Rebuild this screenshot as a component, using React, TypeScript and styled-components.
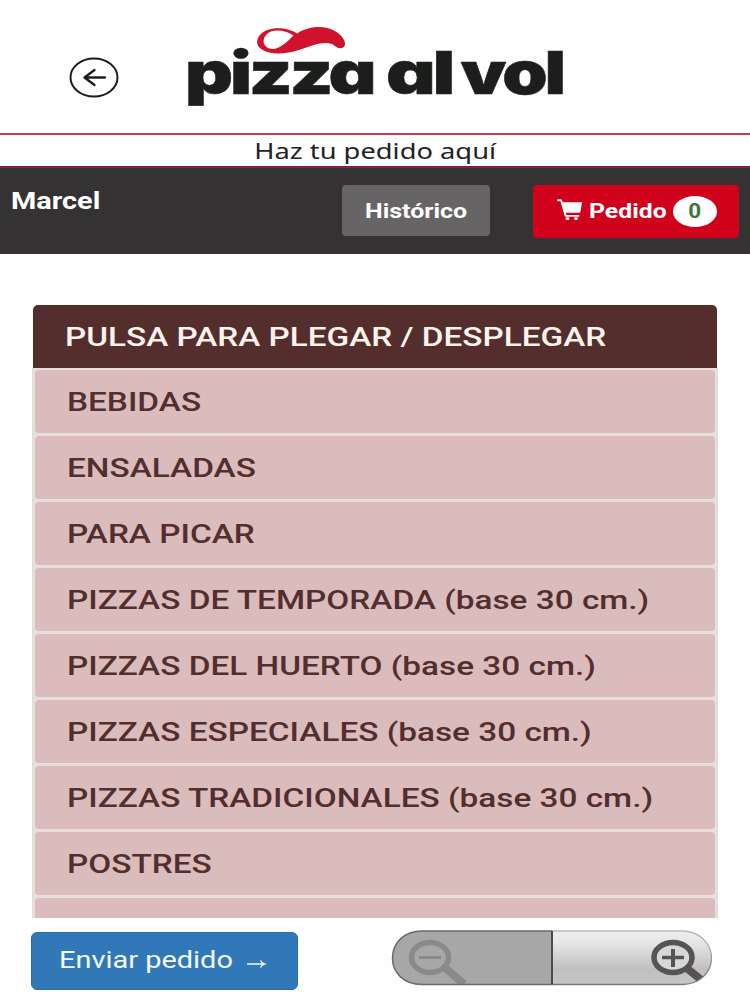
import React from "react";
import styled, { createGlobalStyle } from "styled-components";

const GlobalStyle = createGlobalStyle`
  * { box-sizing: border-box; }
  body {
    margin: 0;
    background: #fefefe;
    font-family: Roboto, "Liberation Sans", sans-serif;
    overflow: hidden;
  }
  button { border: 0; font: inherit; }
`;

const Page = styled.div`
  display: flex;
  flex-direction: column;
  width: 750px;
  height: 1000px;
  overflow: hidden;
`;

const Stretch = styled.span<{ $x: number; $center?: boolean }>`
  display: inline-block;
  white-space: nowrap;
  transform: scaleX(${(p) => p.$x});
  transform-origin: ${(p) => (p.$center ? "center" : "left center")};
`;

const Header = styled.header`
  display: flex;
  align-items: flex-start;
  height: 133px;
  flex: none;
`;

const BackButton = styled.button`
  display: flex;
  margin: 57px 0 0 69px;
  padding: 0;
  background: none;
`;

const Logo = styled.svg`
  display: block;
  margin: 20px 0 0 61px;
  font-family: Inter, sans-serif;
  font-weight: 900;
  font-feature-settings: "cv11" 1, "ss01" 0;
`;

const Tagline = styled.div`
  display: flex;
  justify-content: center;
  flex: none;
  height: 35px;
  border-top: 2px solid #b8404f;
  border-bottom: 2px solid #7c2638;
  color: #222;
  font: 400 21.5px/32px "Noto Sans", sans-serif;
`;

const UserBar = styled.nav`
  display: flex;
  align-items: flex-start;
  flex: none;
  height: 86px;
  padding: 17px 11px 0;
  background: #343232;
  color: #fff;
  font-weight: 700;
`;

const UserName = styled.div`
  width: 331px;
  height: 34px;
  font-size: 23px;
  line-height: 34px;
`;

const BarButton = styled.button<{ $w: number; $h: number; $bg: string; $pad: number }>`
  display: flex;
  align-items: center;
  width: ${(p) => p.$w}px;
  height: ${(p) => p.$h}px;
  padding: 0 0 0 ${(p) => p.$pad}px;
  border-radius: 4px;
  background: ${(p) => p.$bg};
  color: #fff;
  font-size: 21px;
  text-align: left;
`;

const CartLabel = styled.span`
  width: 84px;
  margin-left: 6px;
  padding-bottom: 2px;
`;

const Badge = styled.span`
  display: flex;
  align-items: center;
  justify-content: center;
  width: 44px;
  height: 31px;
  margin-bottom: 1px;
  border-radius: 22px / 15.5px;
  background: #fff;
  color: #3c763d;
  font-size: 20px;
`;

const Spacer = styled.div`
  flex: 1;
`;

const Menu = styled.main`
  flex: none;
  width: 686px;
  height: 613px;
  margin: 51px 0 0 32px;
  overflow: hidden;
`;

const MenuTitle = styled.h1`
  height: 63px;
  margin: 0 1px;
  padding-left: 32px;
  border-radius: 5px 5px 0 0;
  background: #532e2d;
  color: #fdf3ec;
  font-size: 26px;
  font-weight: 500;
  line-height: 64px;
`;

const Rows = styled.ul`
  display: flex;
  flex-direction: column;
  gap: 3px;
  margin: 0;
  padding: 2px 2px 0 2px;
  border: solid #dedbda;
  border-width: 0 1px;
  background: #e8dfdc;
  list-style: none;
`;

const Row = styled.li`
  height: 63px;
  padding-left: 32px;
  border-radius: 4px;
  background: #dbbcbc;
  color: #532e2f;
  font-size: 26px;
  font-weight: 500;
  line-height: 64px;
`;

const Footer = styled.footer`
  display: flex;
  align-items: flex-start;
  justify-content: space-between;
  padding: 12px 38px 0 31px;
`;

const SendButton = styled.button`
  display: flex;
  align-items: center;
  width: 267px;
  height: 58px;
  margin-top: 2px;
  padding: 0 0 2px 27px;
  border: 1px solid #2e6da4;
  border-radius: 6px;
  background: #3178b8;
  color: #f4f8fc;
  font-size: 24px;
`;

const SendLabel = styled.span`
  width: 188px;
  text-align: left;
`;

const SendArrow = styled.svg`
  margin-top: 8px;
`;

const MENU = [
  "BEBIDAS",
  "ENSALADAS",
  "PARA PICAR",
  "PIZZAS DE TEMPORADA (base 30 cm.)",
  "PIZZAS DEL HUERTO (base 30 cm.)",
  "PIZZAS ESPECIALES (base 30 cm.)",
  "PIZZAS TRADICIONALES (base 30 cm.)",
  "POSTRES",
  "",
];

const Cart = styled.svg`
  margin-bottom: 3px;
`;

const CartIcon = () => (
  <Cart width="26" height="22" viewBox="0 0 26 22" fill="#fff">
    <path d="M0 1.200Q0 .2 1.200 .2H3.500Q4.600 .2 4.900 1L5.800 3.300H25L23.500 12.500Q23.300 13.700 22 13.700H8.700L9.500 16H22.300V17.800H8.600Q7.900 17.800 7.700 17L3.500 2.200H1Q0 2.200 0 1.200Z" />
    <ellipse cx="10.500" cy="19.500" rx="1.900" ry="1.600" />
    <ellipse cx="19" cy="19.500" rx="1.900" ry="1.600" />
  </Cart>
);

const ZoomControl = () => (
  <svg width="321" height="56" viewBox="391 930 321 56">
    <defs>
      <linearGradient id="light" x1="0" y1="0" x2="0" y2="1">
        <stop offset="0" stopColor="#f0f0f0" />
        <stop offset=".25" stopColor="#e5e4e5" />
        <stop offset=".45" stopColor="#d5d4d5" />
        <stop offset=".7" stopColor="#c0bec0" />
        <stop offset="1" stopColor="#c8c6c8" />
      </linearGradient>
      <linearGradient id="rim" x1="0" y1="0" x2="0" y2="1">
        <stop offset="0" stopColor="#bbb" />
        <stop offset="1" stopColor="#777" />
      </linearGradient>
      <clipPath id="pill">
        <path d="M422 931H682C699 931 711.500 943 711.500 958S699 984.500 682 984.500H422C404 984.500 392.500 973 392.500 958S404 931 422 931Z" />
      </clipPath>
    </defs>
    <g clipPath="url(#pill)">
      <path fill="#a8a7a8" d="M391 930H552V986H391Z" />
      <path fill="url(#light)" d="M552 930H712V986H552Z" />
      <g fill="none" stroke="#8b8a8b">
        <ellipse cx="430" cy="957.500" rx="18.500" ry="15" strokeWidth="5.500" />
        <path strokeWidth="3" d="M419 957.500H441" />
        <path strokeWidth="8" d="M444 967L464 984" />
      </g>
      <g fill="none" stroke="#555354">
        <ellipse cx="673" cy="957.500" rx="19" ry="15" strokeWidth="5.500" fill="#d8d7d8" />
        <path strokeWidth="3.500" d="M662 957.500H684" />
        <path strokeWidth="4" d="M673 949V967" />
        <path strokeWidth="8" d="M686.500 968L702 980.500" />
      </g>
    </g>
    <path fill="none" stroke="#6b6a6b" strokeWidth="1.500" d="M552 931H422C404 931 392.500 943 392.500 958S404 984.500 422 984.500H552" />
    <path fill="none" stroke="url(#rim)" strokeWidth="1.300" d="M552 931H682C699 931 711.500 943 711.500 958S699 984.500 682 984.500H552" />
    <path stroke="#4b4a4b" strokeWidth="2" d="M552 931V984.500" />
  </svg>
);

export default function App() {
  return (
    <Page>
      <GlobalStyle />
      <Header>
        <BackButton aria-label="Volver">
          <svg width="50" height="42" viewBox="69 57 50 42" fill="none" stroke="#1c1c1e">
            <ellipse cx="94" cy="77.500" rx="23.500" ry="19" strokeWidth="2" />
            <path d="M105 77.500H84.500M94.500 70L84.500 77.500L94.500 85" strokeWidth="2.300" strokeLinecap="round" strokeLinejoin="round" />
          </svg>
        </BackButton>
        <Logo width="400" height="95" viewBox="180 20 400 95">
          <path
            fill="#d0122c"
            fillRule="evenodd"
            d="M297 33.500C288 27 270 26 262 33C255 39 256 46 262 49.500C270 55 285 54.500 299 50C312 45.500 323 41 332 44C335 45.500 337 49 342 48C345 47 345.500 44 344.500 41C341 32 329 26 316 27C309 27.500 302 30 297 33.500ZM293.500 35.500C285 29.500 272 29 267 34C262.500 38.500 262 44.500 268 48C277 52 286 43 293.500 35.500Z"
          />
          <g fill="#1c1e1c" stroke="#1c1e1c" strokeWidth=".5" fontSize="59" letterSpacing="-2.500">
            <text x="185" y="93.800" textLength="188.500" lengthAdjust="spacingAndGlyphs">pizza</text>
            <text x="386" y="93.800" textLength="66" lengthAdjust="spacingAndGlyphs">al</text>
            <text x="460.500" y="93.800" textLength="102.500" lengthAdjust="spacingAndGlyphs">vol</text>
          </g>
        </Logo>
      </Header>
      <Tagline>
        <Stretch $x={1.27} $center>Haz tu pedido aquí</Stretch>
      </Tagline>
      <UserBar>
        <UserName>
          <Stretch $x={1.255}>Marcel</Stretch>
        </UserName>
        <BarButton $w={148} $h={51} $bg="#666465" $pad={22.5}>
          <Stretch $x={1.19}>Histórico</Stretch>
        </BarButton>
        <Spacer />
        <BarButton $w={206} $h={53} $bg="#d0021b" $pad={24}>
          <CartIcon />
          <CartLabel>
            <Stretch $x={1.18}>Pedido</Stretch>
          </CartLabel>
          <Badge>
            <Stretch $x={1.12} $center>0</Stretch>
          </Badge>
        </BarButton>
      </UserBar>
      <Menu>
        <MenuTitle>
          <Stretch $x={1.28}>PULSA PARA PLEGAR / DESPLEGAR</Stretch>
        </MenuTitle>
        <Rows>
          {MENU.map((name, i) => (
            <Row key={i}>
              <Stretch $x={1.282}>{name}</Stretch>
            </Row>
          ))}
        </Rows>
      </Menu>
      <Footer>
        <SendButton>
          <SendLabel>
            <Stretch $x={1.205}>Enviar pedido</Stretch>
          </SendLabel>
          <SendArrow width="20" height="10" viewBox="0 0 20 10" fill="none" stroke="#f4f8fc" strokeWidth="1.300">
            <path d="M0 5H17M13.500 1.500Q14.500 4 18 5Q14.500 6 13.500 8.500" />
          </SendArrow>
        </SendButton>
        <ZoomControl />
      </Footer>
    </Page>
  );
}
